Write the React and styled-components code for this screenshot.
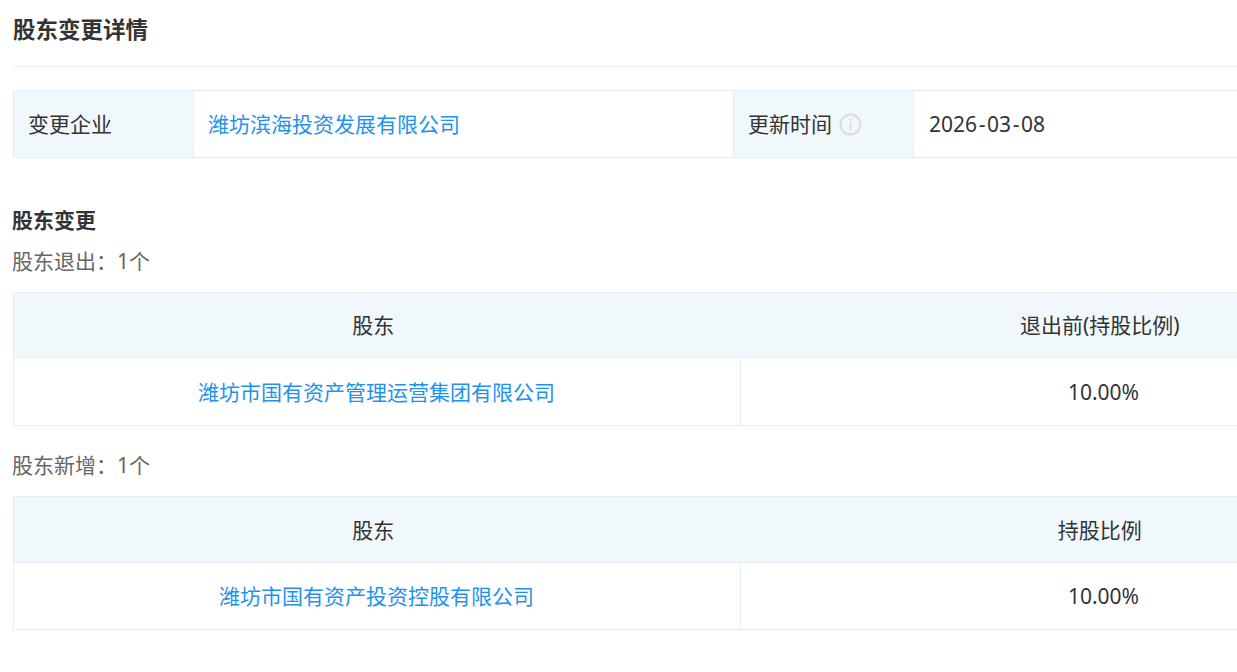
import React from 'react'
import styled, {createGlobalStyle} from 'styled-components'

const GlobalStyle = createGlobalStyle`
    html, body {
        margin: 0;
        padding: 0;
        background: #fff;
        overflow: hidden;
    }
    body {
        font-family: "Noto Sans", "Noto Sans CJK SC", sans-serif;
        color: #333;
    }
`;

const Page = styled.div`
    width: 1237px;
    height: 672px;
    overflow: hidden;
    padding-left: 13px;
    box-sizing: border-box;
`;
const Content = styled.div`
    width: 1460px;
`;
const Title = styled.h2`
    margin: 0 0 0 -1px;
    padding: 13px 0 0 1px;
    height: 53px;
    border-bottom: 1px solid #eef1f5;
    font-size: 22.5px;
    line-height: 33px;
    font-weight: 700;
    color: #333;
`;
const Table = styled.table`
    width: 1460px;
    table-layout: fixed;
    border-collapse: collapse;
    margin-top: ${props => props.$top}px;
`;
const Cell = styled.td`
    border: 1px solid #e4eef6;
    padding: 0 ${props => 15 + (props.$shift || 0)}px 0 14px;
    height: ${props => props.$height}px;
    box-sizing: border-box;
    font-size: 21px;
    font-weight: 400;
    line-height: 32px;
    color: #333;
    text-align: ${props => props.$center ? 'center' : 'left'};
    background: ${props => props.$label ? '#f0f8fc' : '#fff'};
`;
const HeadCell = styled(Cell)`
    &:first-child {
        border-right: none;
    }
    & + & {
        border-left: none;
    }
`;
const CompanyLink = styled.a`
    color: #1e92f0;
    text-decoration: none;
`;
const LabelRow = styled.div`
    display: flex;
    align-items: center;
    gap: 7px;
`;
const Icon = styled.svg`
    flex: none;
`;
const DateText = styled.span`
    margin-left: 1px;
`;
const Dash = styled.span`
    padding: 0 1.6px;
`;
const SectionTitle = styled.h3`
    margin: 46px 0 0 -1px;
    font-size: 21px;
    line-height: 32px;
    font-weight: 700;
    color: #333;
`;
const SubTitle = styled.div`
    margin: ${props => props.$top}px 0 0 -1px;
    font-size: 21px;
    line-height: 32px;
    color: #666;
`;

function InfoIcon() {
    return (
        <Icon width="23" height="23" viewBox="0 0 23 23" fill="none">
            <circle cx="11.5" cy="11.5" r="10" stroke="#dcdcdc" strokeWidth="2"/>
            <rect x="10.5" y="5.6" width="2" height="2.2" fill="#dcdcdc"/>
            <rect x="10.5" y="9.4" width="2" height="8" fill="#dcdcdc"/>
        </Icon>
    );
}

function ShareholderTable(props) {
    return (
        <Table $top={props.top}>
            <colgroup>
                <col style={{width: '727px'}}/>
                <col/>
            </colgroup>
            <tbody>
                <tr>
                    <HeadCell as="th" $label $center $shift={7} $height={props.headHeight}>股东</HeadCell>
                    <HeadCell as="th" $label $center $shift={12} $height={props.headHeight}>{props.ratioLabel}</HeadCell>
                </tr>
                <tr>
                    <Cell $center $height={props.rowHeight}><CompanyLink href="#">{props.name}</CompanyLink></Cell>
                    <Cell $center $shift={5} $height={props.rowHeight}>{props.ratio}</Cell>
                </tr>
            </tbody>
        </Table>
    );
}

export default function App() {
    return (
        <Page>
            <GlobalStyle/>
            <Content>
                <Title>股东变更详情</Title>
                <Table $top={23}>
                    <colgroup>
                        <col style={{width: '180px'}}/>
                        <col style={{width: '540px'}}/>
                        <col style={{width: '180px'}}/>
                        <col/>
                    </colgroup>
                    <tbody>
                        <tr>
                            <Cell $label $height={67}>变更企业</Cell>
                            <Cell $height={67}><CompanyLink href="#">潍坊滨海投资发展有限公司</CompanyLink></Cell>
                            <Cell $label $height={67}>
                                <LabelRow>更新时间<InfoIcon/></LabelRow>
                            </Cell>
                            <Cell $height={67}><DateText>2026<Dash>-</Dash>03<Dash>-</Dash>08</DateText></Cell>
                        </tr>
                    </tbody>
                </Table>
                <SectionTitle>股东变更</SectionTitle>
                <SubTitle $top={9}>股东退出：1个</SubTitle>
                <ShareholderTable top={15} headHeight={65} rowHeight={68} ratioLabel="退出前(持股比例)" name="潍坊市国有资产管理运营集团有限公司" ratio="10.00%"/>
                <SubTitle $top={23}>股东新增：1个</SubTitle>
                <ShareholderTable top={15} headHeight={66} rowHeight={67} ratioLabel="持股比例" name="潍坊市国有资产投资控股有限公司" ratio="10.00%"/>
            </Content>
        </Page>
    );
}
